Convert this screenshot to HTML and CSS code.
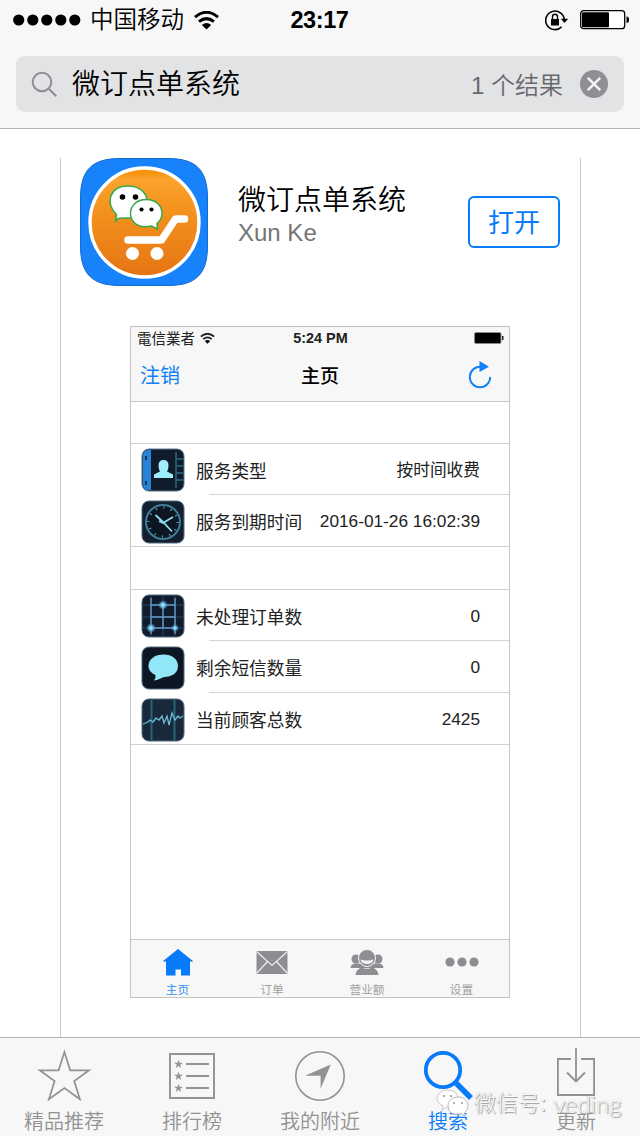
FILE: index.html
```html
<!DOCTYPE html>
<html lang="zh-CN">
<head>
<meta charset="utf-8">
<title>微订点单系统</title>
<link rel="stylesheet" href="styles.css">
</head>
<body>
<div class="phone">
  <header class="top">
    <div class="status">
      <div class="status-left">
        <svg class="signal" width="68" height="12" viewBox="0 0 68 12"><circle cx="5.7" cy="6" r="5.6"/><circle cx="19.8" cy="6" r="5.6"/><circle cx="33.8" cy="6" r="5.6"/><circle cx="47.8" cy="6" r="5.6"/><circle cx="61.8" cy="6" r="5.6"/></svg>
        <span class="carrier">中国移动</span>
        <svg class="wifi" width="25" height="19" viewBox="0 0 25 19"><path d="M1 6.2Q12.5-3.6 24 6.2M5 10.6Q12.5 4.6 20 10.6" fill="none" stroke="#000" stroke-width="3"/><path d="M7.8 14Q12.500 10 17.200 14L12.500 18.600Z"/></svg>
      </div>
      <span class="clock">23:17</span>
      <div class="status-right">
        <svg width="24" height="21" viewBox="0 0 24 21"><path d="M16.600 16.900A9.300 9.300 0 1 1 19.300 10" fill="none" stroke="#000" stroke-width="1.600"/><path d="M15.800 8.800H23.200L19.500 13Z"/><rect x="6" y="9" width="8" height="6.500"/><path d="M7.500 9V6.800a2.500 2.500 0 0 1 5 0V9" fill="none" stroke="#000" stroke-width="1.400"/></svg>
        <svg width="49" height="20" viewBox="0 0 49 20"><rect x=".7" y=".7" width="44" height="18" rx="3" fill="#fff" stroke="#000" stroke-width="1.300"/><rect x="2" y="2.300" width="27" height="15" rx="1"/><path d="M46.500 6.500q2.500 0 2.500 3.300t-2.500 3.300z"/></svg>
      </div>
    </div>
    <div class="search">
      <svg width="27" height="27" viewBox="0 0 27 27" fill="none" stroke="#8e8e93" stroke-width="2"><circle cx="11" cy="11" r="9.300"/><path d="M17.500 17.500L25.300 25.300"/></svg>
      <span class="query">微订点单系统</span>
      <span class="count">1 个结果</span>
      <svg width="28" height="28" viewBox="0 0 28 28"><circle cx="14" cy="14" r="14" fill="#8e8e93"/><path d="M7.800 7.800L20.200 20.200M20.200 7.800L7.800 20.200" stroke="#f4f4f6" stroke-width="2.600"/></svg>
    </div>
  </header>

  <main class="results">
    <article class="card">
      <div class="app">
        <svg class="app-icon" width="128" height="128" viewBox="0 0 128 128">
          <defs><linearGradient id="orange" x1="0" y1="0" x2="0" y2="1"><stop offset="0" stop-color="#fb9204"/><stop offset=".05" stop-color="#f79410"/><stop offset=".1" stop-color="#fca42e"/><stop offset=".35" stop-color="#f5941e"/><stop offset="1" stop-color="#e57414"/></linearGradient></defs>
          <path d="M40 .5H88C116 .5 127.500 12 127.500 40V88C127.500 116 116 127.500 88 127.500H40C12 127.500 .5 116 .5 88V40C.5 12 12 .5 40 .5Z" fill="#1882fb" stroke="#116bd2"/>
          <circle cx="64.500" cy="64.500" r="54.500" fill="url(#orange)" stroke="#fff" stroke-width="3.400"/>
          <path d="M38 60.500L35.500 63L36.500 56.500C25 46 29 28 48 28C60 28 67 35 67.500 44C67 54 60 60 49 60C45 60 42 59.500 38 60.500Z" fill="#fff" stroke="#38a74a" stroke-width="1.500"/>
          <path d="M66 41.500C76 41.500 82 47.500 82 55.500C82 60 80 63 77 65.500L77.500 71L71.500 68C58 71 50.500 64 50.500 55.500C50.500 47.500 57 41.500 66 41.500Z" fill="#fff" stroke="#38a74a" stroke-width="1.500"/>
          <circle cx="42.500" cy="39" r="2.800"/><circle cx="55.500" cy="39" r="2.800"/><circle cx="61.500" cy="51.500" r="2.100"/><circle cx="71.500" cy="51.500" r="2.100"/>
          <path d="M48 82H81.500L95.500 61H104.500" fill="none" stroke="#fff" stroke-width="7.500" stroke-linecap="round" stroke-linejoin="round"/>
          <circle cx="52.500" cy="95.500" r="6.500" fill="#fff"/><circle cx="77" cy="95.500" r="6.500" fill="#fff"/>
        </svg>
        <div class="app-info">
          <h1 class="app-name">微订点单系统</h1>
          <p class="app-author">Xun Ke</p>
        </div>
        <button class="open">打开</button>
      </div>

      <section class="preview">
        <div class="p-top">
          <div class="p-status">
            <span class="p-carrier">電信業者<svg width="15" height="11" viewBox="0 0 25 19"><path d="M1 6.200Q12.500-3.600 24 6.200M5 10.600Q12.500 4.600 20 10.600" fill="none" stroke="#222" stroke-width="3"/><path d="M7.800 14Q12.500 10 17.200 14L12.500 18.600Z"/></svg></span>
            <span class="p-clock">5:24 PM</span>
            <svg class="p-battery" width="30" height="12" viewBox="0 0 30 12"><rect x=".5" y=".5" width="26.500" height="11" rx="1.500" fill="#000" stroke="#888"/><rect x="28" y="4" width="1.500" height="4" fill="#222"/></svg>
          </div>
          <div class="p-nav">
            <span class="p-link">注销</span>
            <span class="p-title">主页</span>
            <svg class="p-refresh" width="24" height="28" viewBox="0 0 24 28"><path d="M12 5.800A10.200 10.200 0 1 0 22.200 16" fill="none" stroke="#0f80f5" stroke-width="1.900"/><path d="M11.500 0L21 5.800L11.500 11Z" fill="#0f80f5"/></svg>
          </div>
        </div>
        <div class="group">
          <div class="row">
            <svg class="tile" viewBox="0 0 44 44"><rect x="1" y="1" width="42" height="42" rx="7" fill="#111c2a" stroke="#5c7894"/><path d="M7 2H10V42H7Q2 42 2 36V8Q2 2 7 2Z" fill="#2884d8"/><path d="M5 8v4M5 33v4" stroke="#123a60" stroke-width="2"/><path d="M35 4V40M35 11h7M35 18h7M35 25h7M35 32h7" stroke="#2a6b83" stroke-width="1.400"/><path d="M13 30V26.500L19 23.500Q17.500 21 17.500 17.500Q17.500 12 22.500 12Q27.500 12 27.500 17.500Q27.500 21 26 23.500L32 26.500V30Z" fill="#a0edfb"/></svg>
            <span class="label">服务类型</span><span class="value cn">按时间收费</span>
          </div>
          <div class="row">
            <svg class="tile" viewBox="0 0 44 44"><rect x="1" y="1" width="42" height="42" rx="7" fill="#131f2e" stroke="#526b83"/><circle cx="22" cy="22" r="17" fill="#0d1622" stroke="#3c7e96" stroke-width="2"/><circle cx="22" cy="22" r="14.500" fill="none" stroke="#5fa7bd" stroke-width="2.500" stroke-dasharray="1 6.590"/><path d="M14.500 15L22 22L31 31.500M32 17L22 23L18 21" fill="none" stroke="#8cdded" stroke-width="1.800"/></svg>
            <span class="label">服务到期时间</span><span class="value">2016-01-26 16:02:39</span>
          </div>
        </div>
        <div class="group">
          <div class="row">
            <svg class="tile" viewBox="0 0 44 44"><defs><radialGradient id="glow"><stop offset="0" stop-color="#c1f6ff"/><stop offset=".4" stop-color="#71bce6"/><stop offset="1" stop-color="#4b8fc8" stop-opacity="0"/></radialGradient></defs><rect x="1" y="1" width="42" height="42" rx="7" fill="#101b2c" stroke="#526b83"/><path d="M2 23H42M2 34H42M10 2V42M22 2V42M34 2V42M2 11H42" stroke="#29466c"/><path d="M10 4V40M22 10V34M34 4V40M10 11H34M10 34H34M10 23H34" fill="none" stroke="#649bc4" stroke-width="1.400"/><g fill="url(#glow)"><circle cx="22" cy="11" r="5"/><circle cx="10" cy="34" r="5"/><circle cx="34" cy="34" r="4"/></g></svg>
            <span class="label">未处理订单数</span><span class="value">0</span>
          </div>
          <div class="row">
            <svg class="tile" viewBox="0 0 44 44"><rect x="1" y="1" width="42" height="42" rx="7" fill="#0d1723" stroke="#526b83"/><path d="M22.500 8.500C31 8.500 37 13 37 20C37 27 31 31 23 31C20 32 17 34 13 34.500Q15 32 14.500 29C10 27 7.500 24 7.500 20C7.500 13 14 8.500 22.500 8.500Z" fill="#91e7f8"/></svg>
            <span class="label">剩余短信数量</span><span class="value">0</span>
          </div>
          <div class="row">
            <svg class="tile" viewBox="0 0 44 44"><rect x="1" y="1" width="42" height="42" rx="7" fill="#19293b" stroke="#526b83"/><path d="M10.500 2V42M33.500 2V42" stroke="#2b6479" stroke-width="2"/><path d="M2 26L7 24L9 22L12 24L15 20L18 22L21 18L23 25L26 18L28 27L31 15L34 22L37 18L39 20L42 18" fill="none" stroke="#69bfd0" stroke-width="1.300"/></svg>
            <span class="label">当前顾客总数</span><span class="value">2425</span>
          </div>
        </div>
        <div class="p-tabs">
          <div class="p-tab active"><svg width="32" height="28" viewBox="0 0 32 28"><path d="M16 0L31.500 12.500H28V26.500H19V20.500H13.500V26.500H4V12.500H.5Z" fill="#087bfa"/></svg><span>主页</span></div>
          <div class="p-tab"><svg width="32" height="28" viewBox="0 0 32 28"><rect x=".5" y="2" width="31" height="23" fill="#8e8d92"/><path d="M.5 2.500L16 16.500L31.500 2.500M.5 24.500L11.500 12.500M31.500 24.500L20.500 12.500" stroke="#eee" stroke-width="1.200" fill="none"/></svg><span>订单</span></div>
          <div class="p-tab"><svg width="34" height="28" viewBox="0 0 34 28" fill="#8e8d92"><circle cx="6" cy="10" r="4.500"/><circle cx="28" cy="10" r="4.500"/><path d="M.5 19Q.5 15 5 14.500H29Q33.500 15 33.500 19Z"/><circle cx="17" cy="9" r="8.500" stroke="#f7f7f7"/><path d="M10.500 10.500Q17 12.500 23.500 10.500Q22.500 15 17 15Q11.500 15 10.500 10.500Z" fill="#f0f0f0"/><path d="M5.500 26Q6 20 12 18.500Q17 21 22 18.500Q28 20 28.500 26Z"/></svg><span>营业额</span></div>
          <div class="p-tab"><svg width="34" height="28" viewBox="0 0 34 28" fill="#8e8d92"><circle cx="5" cy="13" r="4.600"/><circle cx="17" cy="13" r="4.600"/><circle cx="29" cy="13" r="4.600"/></svg><span>设置</span></div>
        </div>
      </section>
    </article>
  </main>

  <nav class="tabs">
    <div class="tab"><svg width="56" height="56" viewBox="0 0 56 56" fill="none" stroke="#929292" stroke-width="1.700"><path d="M28.400 6L34.200 24.300H53L38.200 35L43.900 53.300L28.400 42L12.900 53.300L18.600 35L3.800 24.300H22.600Z"/></svg><span>精品推荐</span></div>
    <div class="tab"><svg width="56" height="56" viewBox="0 0 56 56"><path d="M6 8H50V52H6ZM22 18H45M22 30H45M22 42H45" fill="none" stroke="#929292" stroke-width="1.900"/><g fill="#929292"><path id="mini-star" d="M14.500 13.500l1 3.200h3.400l-2.700 2 1 3.300-2.700-2-2.700 2 1-3.300-2.700-2h3.400z"/><use href="#mini-star" y="12"/><use href="#mini-star" y="24"/></g></svg><span>排行榜</span></div>
    <div class="tab"><svg width="56" height="56" viewBox="0 0 56 56"><circle cx="28" cy="30" r="24.200" fill="none" stroke="#929292" stroke-width="1.600"/><path d="M38.800 18.500L28.600 42.800V29.700H13Z" fill="#929292"/></svg><span>我的附近</span></div>
    <div class="tab on"><svg width="56" height="56" viewBox="0 0 56 56" fill="none" stroke="#087bfa"><circle cx="23" cy="24" r="17.200" stroke-width="3.800"/><path d="M34.500 35.500L51 52" stroke-width="5.500"/></svg><span>搜索</span></div>
    <div class="tab"><svg width="56" height="56" viewBox="0 0 56 56" fill="none" stroke="#929292" stroke-width="1.800"><path d="M23 13H9.900V49H46.100V13H33M28 2V35M19 26.500L28 35.500L37 26.500"/></svg><span>更新</span></div>
    <div class="watermark">
      <svg width="34" height="30" viewBox="0 0 34 30"><path d="M11.500 1C18 1 22 5 22 10Q22 18 11 18L6 21L7 17Q1 14 1 10C1 5 5 1 11.500 1Z" fill="#fff" fill-opacity=".88" stroke="#bbb" stroke-width=".8"/><path d="M22 8C28 8 32 12 32 17Q32 21 28.500 23.500L29 27L25 25Q12 27 12 17C12 12 16 8 22 8Z" fill="#fff" fill-opacity=".92" stroke="#aaa" stroke-width=".8"/><g fill="#999"><circle cx="8" cy="7" r="1.100"/><circle cx="15" cy="7" r="1.100"/><circle cx="18" cy="14" r="1"/><circle cx="26" cy="14" r="1"/></g></svg>
      <span class="wm-cn">微信号:</span><span class="wm-id">veding</span>
    </div>
  </nav>
</div>
</body>
</html>
```
FILE: styles.css
```css
* { box-sizing: border-box; margin: 0; padding: 0; }
body { font-family: "Liberation Sans", "Noto Sans CJK SC", sans-serif; background: #fff; }
svg { display: block; flex: none; }
span, h1, p { white-space: nowrap; }
.phone { width: 640px; height: 1136px; display: flex; flex-direction: column; overflow: hidden; color: #000; }

.top { height: 129px; flex: none; background: #f7f7f7; border-bottom: 1px solid #b2b2b2; padding: 0 16px; }
.status { height: 56px; padding-bottom: 16px; margin: 0 -5px 0 -3px; display: grid; grid-template-columns: 1fr auto 1fr; align-items: center; }
.status-left { display: flex; align-items: center; }
.carrier { font-size: 23.5px; line-height: 38px; margin: 0 10px 1px 9px; font-weight: 350; }
.clock { font-size: 23.5px; font-weight: 700; letter-spacing: -.4px; line-height: 40px; padding-right: 3px; }
.status-right { display: flex; justify-content: flex-end; align-items: center; gap: 11px; }
.search { height: 56px; border-radius: 9px; background: #e2e3e5; display: flex; align-items: center; padding: 0 16px 0 15px; }
.query { margin: 0 0 4px 14px; font-size: 28px; font-weight: 350; }
.count { margin: 0 17px 2px auto; font-size: 24px; font-weight: 350; color: #68686c; }

.results { flex: 1; min-height: 0; padding: 29px 59px 0 60px; }
.card { height: 100%; border: solid #c8c8c8; border-width: 0 1px; padding: 0 19px; }
.app { height: 128px; display: flex; align-items: flex-start; }
.app-info { margin: 25px 0 0 30px; }
.app-name { font-size: 28px; line-height: 36px; font-weight: 350; }
.app-author { font-size: 24px; line-height: 28px; color: #747474; }
.open { width: 92px; height: 52px; margin: 38px 1px 0 auto; padding-top: 2px; border: 2px solid #087bfa; border-radius: 6px; background: #fff; color: #087bfa; font: 26px/40px "Liberation Sans", "Noto Sans CJK SC", sans-serif; }

.preview { width: 380px; height: 672px; margin: 40px 0 0 50px; border: 1px solid #c4c4c4; display: flex; flex-direction: column; }
.p-top { height: 75px; background: #f7f7f7; border-bottom: 1px solid #c8c8c8; }
.p-status { height: 22px; padding: 0 5px 0 6px; display: grid; grid-template-columns: 1fr auto 1fr; align-items: center; }
.p-carrier { display: flex; align-items: center; gap: 5px; font: 14.5px/20px "Noto Sans CJK TC", sans-serif; color: #222; }
.p-clock { font-size: 14.4px; font-weight: 700; color: #222; }
.p-battery { justify-self: end; }
.p-nav { height: 51px; padding: 0 17px 0 9px; display: grid; grid-template-columns: 1fr auto 1fr; align-items: center; font-size: 20px; }
.p-link { color: #0f80f5; }
.p-title { font-size: 19px; font-weight: 500; padding-left: 8px; }
.p-refresh { justify-self: end; }
.group { margin-top: 41px; border: solid #d0d0d0; border-width: 1px 0; }
.group + .group { margin-top: 42px; }
.row { height: 52px; display: flex; align-items: center; padding: 1px 29px 0 10px; background: linear-gradient(#d4d4d4, #d4d4d4) 78px 100% / 100% 1px no-repeat; }
.row:first-child { height: 51px; }
.row:last-child { height: 51px; padding-top: 2px; background: none; }
.tile { width: 44px; height: 44px; }
.label { font-size: 17.7px; margin: 0 0 1px 11px; color: #222; }
.value { font-size: 17.25px; margin-left: auto; color: #222; }
.value.cn { font-size: 16.7px; margin-bottom: 2px; }
.p-tabs { margin-top: auto; height: 58px; border-top: 1px solid #c8c8c8; background: #f7f7f7; display: grid; grid-template-columns: 94px 95px 95px 94px; }
.p-tab { display: flex; flex-direction: column; align-items: center; padding: 9px 1px 0 0; font-size: 11.7px; line-height: 14px; color: #a0a0a0; }
.p-tab span { padding-top: 6px; }
.p-tab.active { color: #2f8fed; }

.tabs { height: 99px; flex: none; border-top: 1px solid #b2b2b2; background: #f7f7f7; display: grid; grid-template-columns: repeat(5, 128px); position: relative; }
.tab { display: flex; flex-direction: column; align-items: center; padding-top: 8px; color: #929292; font-size: 20px; line-height: 28px; font-weight: 350; }
.tab span { margin-top: 6px; }
.on { color: #087bfa; }
.watermark { position: absolute; left: 436px; top: 51px; display: flex; align-items: center; color: #f9f9f9; text-shadow: 1px 1px 1px #999, 0 0 1px #aaa; font-weight: 300; }
.wm-cn { font-size: 22px; margin-left: 4px; line-height: 28px; }
.wm-id { font-family: Lato, sans-serif; font-size: 24px; margin-left: 7px; line-height: 28px; }
```
